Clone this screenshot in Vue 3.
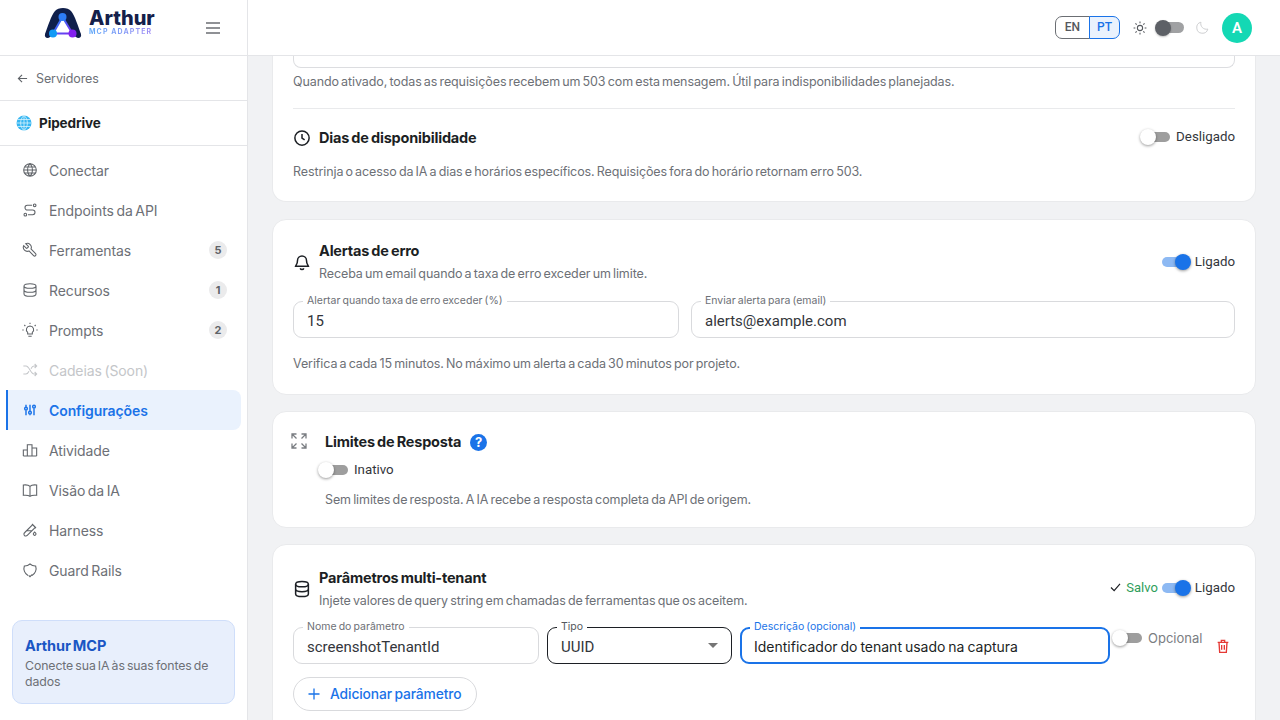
<template>
  <div class="app">
    <aside class="sidebar">
      <div class="brand">
        <div class="logo">
          <svg class="logo__mark" viewBox="0 0 38 32" width="38" height="32">
            <defs>
              <linearGradient id="tri" x1="0" y1="0" x2="1" y2="1">
                <stop offset="0" stop-color="#1e88f5" />
                <stop offset="1" stop-color="#7c2bf0" />
              </linearGradient>
            </defs>
            <path d="M1 27C4 19 7 9 11 4 14 0 24 0 27 4 31 9 34 19 37 27 38 31 34 32 32 30 28 27 24 25 19 25 14 25 10 27 6 30 4 32 0 31 1 27Z" fill="#0f1f4b" />
            <path d="M18.500 10 9 26.500H28.500Z" fill="#fff" stroke="url(#tri)" stroke-width="2" stroke-linejoin="round" />
            <circle cx="18.500" cy="10" r="4" fill="#2d7cf5" />
            <circle cx="9" cy="26.500" r="4" fill="#129af5" />
            <circle cx="28.500" cy="26.500" r="4" fill="#8221ee" />
          </svg>
          <div class="logo__text">
            <span class="logo__name">Arthur</span>
            <span class="logo__sub">MCP ADAPTER</span>
          </div>
        </div>
        <svg class="burger" viewBox="0 0 14 12" width="14" height="12">
          <path d="M0 1H14M0 6H14M0 11H14" stroke="#6b6e73" stroke-width="1.500" fill="none" />
        </svg>
      </div>

      <div class="back">
        <svg viewBox="0 0 12 12" width="11" height="11">
          <path d="M11 6H1.500M5.500 2 1.500 6l4 4" stroke="#5f6368" stroke-width="1.200" fill="none" />
        </svg>
        <span>Servidores</span>
      </div>

      <div class="server">
        <svg viewBox="0 0 16 16" width="16" height="16">
          <circle cx="8" cy="8" r="7.500" fill="#35b6f2" />
          <path d="M.5 8h15M1.500 4.500h13M1.500 11.500h13M8 .5v15M8 .5C3.500 4 3.500 12 8 15.500M8 .5c4.500 3.500 4.500 11.500 0 15" stroke="#d7f2fd" stroke-width=".8" fill="none" />
        </svg>
        <span>Pipedrive</span>
      </div>

      <nav class="nav">
        <div
          v-for="item in navItems"
          :key="item.label"
          :class="['nav__item', { 'nav__item--active': item.active, 'nav__item--off': item.off }]"
        >
          <svg class="nav__icon" viewBox="0 0 24 24" width="16" height="16">
            <path :d="item.icon" :transform="item.flip ? 'matrix(-1 0 0 1 24 0)' : undefined" />
          </svg>
          <span class="nav__label">{{ item.label }}</span>
          <span v-if="item.badge" class="nav__badge">{{ item.badge }}</span>
        </div>
      </nav>

      <div class="promo">
        <div class="promo__title">Arthur MCP</div>
        <div class="promo__text">Conecte sua IA às suas fontes de dados</div>
      </div>
    </aside>

    <div class="main">
      <header class="topbar">
        <div class="lang">
          <span class="lang__btn">EN</span>
          <span class="lang__btn lang__btn--on">PT</span>
        </div>
        <svg class="sun" viewBox="0 0 24 24" width="14" height="14">
          <circle cx="12" cy="12" r="4.500" />
          <path d="M12 1v3M12 20v3M1 12h3M20 12h3M4.200 4.200l2.100 2.100M17.700 17.700l2.100 2.100M4.200 19.800l2.100-2.100M17.700 6.300l2.100-2.100" />
        </svg>
        <span class="theme-switch"><span class="theme-switch__knob"></span></span>
        <svg class="moon" viewBox="0 0 24 24" width="15" height="15">
          <path d="M20.500 14.500A9 9 0 0 1 9.500 3.500a9 9 0 1 0 11 11Z" />
        </svg>
        <span class="avatar">A</span>
      </header>

      <div class="content">
        <div class="scroll">
          <section class="card card--first">
            <div class="field-stub"></div>
            <p class="hint">Quando ativado, todas as requisições recebem um 503 com esta mensagem. Útil para indisponibilidades planejadas.</p>
            <hr class="divider" />
            <div class="row">
              <div class="row__title">
                <svg class="head-icon" viewBox="0 0 24 24" width="18" height="18">
                  <circle cx="12" cy="12" r="9.500" />
                  <path d="M12 6.500V12l3.500 2.500" />
                </svg>
                <h3>Dias de disponibilidade</h3>
              </div>
              <div class="toggle">
                <span class="switch"><span class="switch__knob"></span></span>
                <span class="toggle__label">Desligado</span>
              </div>
            </div>
            <p class="hint hint--dias">Restrinja o acesso da IA a dias e horários específicos. Requisições fora do horário retornam erro 503.</p>
          </section>

          <section class="card card--alerts">
            <div class="row">
              <div class="row__title">
                <svg class="head-icon" viewBox="0 0 24 24" width="18" height="18">
                  <path d="M6 10a6 6 0 0 1 12 0c0 5 2 6 2.500 7.500h-17C4 16 6 15 6 10Z" />
                  <path d="M9.500 20.500a2.800 2.800 0 0 0 5 0" />
                </svg>
                <div>
                  <h3>Alertas de erro</h3>
                  <p class="sub">Receba um email quando a taxa de erro exceder um limite.</p>
                </div>
              </div>
              <div class="toggle">
                <span class="switch switch--on"><span class="switch__knob"></span></span>
                <span class="toggle__label">Ligado</span>
              </div>
            </div>
            <div class="alert-fields">
              <label class="field">
                <span class="field__legend">Alertar quando taxa de erro exceder (%)</span>
                <span class="field__value">15</span>
              </label>
              <label class="field">
                <span class="field__legend">Enviar alerta para (email)</span>
                <span class="field__value">alerts@example.com</span>
              </label>
            </div>
            <p class="hint">Verifica a cada 15 minutos. No máximo um alerta a cada 30 minutos por projeto.</p>
          </section>

          <section class="card card--limits">
            <svg class="expand" viewBox="0 0 16 16" width="16" height="16">
              <path d="M1 5.500V1h4.500M1 1l4.500 4.500M15 5.500V1h-4.500M15 1l-4.500 4.500M1 10.500V15h4.500M1 15l4.500-4.500M15 10.500V15h-4.500M15 15l-4.500-4.500" />
            </svg>
            <div class="limits__body">
              <div class="limits__title">
                <h3>Limites de Resposta</h3>
                <span class="help">?</span>
              </div>
              <div class="toggle toggle--inativo">
                <span class="switch"><span class="switch__knob"></span></span>
                <span class="toggle__label">Inativo</span>
              </div>
              <p class="hint">Sem limites de resposta. A IA recebe a resposta completa da API de origem.</p>
            </div>
          </section>

          <section class="card card--tenant">
            <div class="row">
              <div class="row__title">
                <svg class="head-icon" viewBox="0 0 24 24" width="18" height="18">
                  <ellipse cx="12" cy="5.500" rx="8.500" ry="3.500" />
                  <path d="M3.500 5.500v13c0 2 3.800 3.500 8.500 3.500s8.500-1.500 8.500-3.500v-13M3.500 12c0 2 3.800 3.500 8.500 3.500s8.500-1.500 8.500-3.500" />
                </svg>
                <div>
                  <h3>Parâmetros multi-tenant</h3>
                  <p class="sub">Injete valores de query string em chamadas de ferramentas que os aceitem.</p>
                </div>
              </div>
              <div class="toggle">
                <svg class="check" viewBox="0 0 12 10" width="11" height="9">
                  <path d="M1 5l3.500 3.500L11 1" />
                </svg>
                <span class="saved">Salvo</span>
                <span class="switch switch--on"><span class="switch__knob"></span></span>
                <span class="toggle__label">Ligado</span>
              </div>
            </div>
            <div class="param">
              <label class="field field--name">
                <span class="field__legend">Nome do parâmetro</span>
                <span class="field__value">screenshotTenantId</span>
              </label>
              <label class="field field--type field--dark">
                <span class="field__legend">Tipo</span>
                <span class="field__value">UUID</span>
                <span class="caret"></span>
              </label>
              <label class="field field--desc field--focus">
                <span class="field__legend">Descrição (opcional)</span>
                <span class="field__value field__value--jakarta">Identificador do tenant usado na captura</span>
              </label>
              <div class="optional">
                <span class="switch"><span class="switch__knob"></span></span>
                <span class="optional__label">Opcional</span>
              </div>
              <svg class="trash" viewBox="0 0 24 24" width="16" height="16">
                <path d="M4 6.500h16M9.500 6.500V3.500h5v3M6 6.500l1 15h10l1-15M10 10.500v7M14 10.500v7" />
              </svg>
            </div>
            <div class="add">
              <svg viewBox="0 0 12 12" width="12" height="12">
                <path d="M6 .5v11M.5 6h11" stroke="#1a73e8" stroke-width="1.300" fill="none" />
              </svg>
              <span>Adicionar parâmetro</span>
            </div>
          </section>
        </div>
      </div>
    </div>
  </div>
</template>

<script setup>
const navItems = [
  { label: 'Conectar', icon: 'M12 2.500a9.500 9.500 0 1 0 0 19 9.500 9.500 0 0 0 0-19ZM2.500 12h19M3.700 7.500h16.600M3.700 16.500h16.600M12 2.500c-5 5-5 14 0 19M12 2.500c5 5 5 14 0 19' },
  { label: 'Endpoints da API', icon: 'M5 21a2 2 0 1 0 0-4 2 2 0 0 0 0 4ZM19 7a2 2 0 1 0 0-4 2 2 0 0 0 0 4ZM15 5H8a3.500 3.500 0 0 0 0 7h8a3.500 3.500 0 0 1 0 7H9' },
  { label: 'Ferramentas', flip: true, badge: 5, icon: 'M14.700 6.300a1 1 0 0 0 0 1.400l1.600 1.600a1 1 0 0 0 1.400 0l3.770-3.770a6 6 0 0 1-7.940 7.940l-6.910 6.910a2.120 2.120 0 0 1-3-3l6.910-6.910a6 6 0 0 1 7.940-7.940l-3.760 3.760Z' },
  { label: 'Recursos', badge: 1, icon: 'M12 2.500c5 0 9 1.500 9 3.500s-4 3.500-9 3.500S3 8 3 6s4-3.500 9-3.500ZM3 6v12c0 2 4 3.500 9 3.500s9-1.500 9-3.500V6M3 12c0 2 4 3.500 9 3.500s9-1.500 9-3.500' },
  { label: 'Prompts', badge: 2, icon: 'M12 6a5.500 5.500 0 0 0-3.500 9.700V18h7v-2.300A5.500 5.500 0 0 0 12 6ZM9.500 21.500h5M12 1v2M3.500 4.500 5 6M20.500 4.500 19 6M.5 12h2M21.500 12h2' },
  { label: 'Cadeias (Soon)', off: true, icon: 'M2 6h4c5 0 7 12 12 12h4M2 18h4c2 0 3.500-2 4.500-4M13.500 10c1-2 2.500-4 4.500-4h4M19 3l3 3-3 3M19 15l3 3-3 3' },
  { label: 'Configurações', active: true, icon: 'M4 10a2 2 0 1 0 4 0 2 2 0 0 0-4 0M6 4v4M6 12v8M10 16a2 2 0 1 0 4 0 2 2 0 0 0-4 0M12 4v10M12 18v2M16 7a2 2 0 1 0 4 0 2 2 0 0 0-4 0M18 4v1M18 9v11' },
  { label: 'Atividade', icon: 'M2 21V12h6v9M8 21V4h7v17M15 21V9h7v12M2 21h20' },
  { label: 'Visão da IA', icon: 'M12 6.500C10 4.500 6 4 2 4.500V20c4-.5 8 0 10 1.500 2-1.500 6-2 10-1.500V4.500C18 4 14 4.500 12 6.500ZM12 6.500v15' },
  { label: 'Harness', icon: 'M20 8.040 7.880 20.160a2.860 2.860 0 1 1-4.040-4.040L15.960 4M7 13h8M19 15l1.500 1.600a2 2 0 1 1-3 0L19 15ZM15 3l6 6' },
  { label: 'Guard Rails', icon: 'M9 20.300A12 12 0 0 1 3.500 6 12 12 0 0 0 12 3a12 12 0 0 0 8.500 3A12 12 0 0 1 15 20.300M10 20l2 2 3-3' },
]
</script>

<style>
html,
body {
  margin: 0;
  background: #f1f2f4;
}
</style>

<style scoped>
.app {
  display: flex;
  width: 1280px;
  height: 720px;
  overflow: hidden;
  font-family: Inter, "Open Sans", sans-serif;
  letter-spacing: -0.1px;
  word-spacing: -1.2px;
  color: #1c1f24;
  background: #f1f2f4;
}

/* Sidebar */
.sidebar {
  flex: 0 0 248px;
  box-sizing: border-box;
  display: flex;
  flex-direction: column;
  background: #fff;
  border-right: 1px solid #e4e5e8;
}

.brand {
  box-sizing: border-box;
  height: 56px;
  display: flex;
  align-items: center;
  padding: 0 27px 0 44px;
  justify-content: space-between;
  border-bottom: 1px solid #e4e5e8;
}

.logo {
  display: flex;
  align-items: center;
  gap: 7px;
  margin-bottom: 9px;
}

.logo__text {
  display: flex;
  flex-direction: column;
  margin-bottom: 2px;
}

.logo__name {
  font-size: 20px;
  font-weight: 800;
  line-height: 20px;
  letter-spacing: 0;
  color: #14204a;
}

.logo__sub {
  font-size: 7px;
  font-weight: 700;
  line-height: 8px;
  letter-spacing: 1.100px;
  word-spacing: 0;
  background: linear-gradient(90deg, #5fa8f8, #a58df5);
  -webkit-background-clip: text;
  background-clip: text;
  color: transparent;
}

.back {
  box-sizing: border-box;
  height: 45px;
  display: flex;
  align-items: center;
  gap: 8px;
  padding-left: 17px;
  font-size: 12.500px;
  color: #6d7076;
  border-bottom: 1px solid #e4e5e8;
}

.server {
  box-sizing: border-box;
  height: 45px;
  display: flex;
  align-items: center;
  gap: 7px;
  padding-left: 16px;
  font-size: 13.500px;
  font-weight: 700;
  border-bottom: 1px solid #e4e5e8;
}

.nav {
  display: flex;
  flex-direction: column;
  padding: 4px 6px 0;
}

.nav__item {
  box-sizing: border-box;
  height: 40px;
  display: flex;
  align-items: center;
  padding: 0 14px 0 16px;
  font-size: 14px;
  color: #6d7076;
  border-radius: 0 8px 8px 0;
}

.nav__icon {
  flex: none;
  margin-right: 11px;
  fill: none;
  stroke: #5f6368;
  stroke-width: 1.600;
}

.nav__label {
  flex: 1;
}

.nav__item--off {
  color: #c4c6c9;
}

.nav__item--off .nav__icon {
  stroke: #c4c6c9;
}

.nav__item--active {
  padding-left: 14px;
  border-left: 2px solid #1a73e8;
  background: #eaf2fd;
  color: #1a73e8;
  font-weight: 600;
}

.nav__item--active .nav__icon {
  stroke: #1a73e8;
  stroke-width: 2.200;
}

.nav__badge {
  width: 18px;
  height: 18px;
  border-radius: 50%;
  background: #ebebec;
  color: #5f6368;
  font-size: 11px;
  font-weight: 700;
  line-height: 18px;
  text-align: center;
}

.promo {
  box-sizing: border-box;
  margin: 30px 12px 0;
  height: 84px;
  padding: 16px 12px;
  border: 1px solid #cfdefa;
  border-radius: 10px;
  background: #e8effc;
}

.promo__title {
  font-size: 14.500px;
  line-height: 18px;
  font-weight: 700;
  color: #1a56c4;
}

.promo__text {
  margin-top: 3px;
  font-size: 12.300px;
  line-height: 16px;
  color: #6d7076;
}

/* Top bar */
.main {
  flex: 1;
  min-width: 0;
  display: flex;
  flex-direction: column;
}

.topbar {
  flex: 0 0 56px;
  box-sizing: border-box;
  display: flex;
  align-items: center;
  justify-content: flex-end;
  padding-right: 28px;
  background: #fff;
  border-bottom: 1px solid #e4e5e8;
}

.lang {
  display: flex;
  margin-right: 13px;
}

.lang__btn {
  box-sizing: border-box;
  width: 35px;
  height: 23px;
  border: 1px solid #6b6e73;
  border-radius: 7px 0 0 7px;
  font-size: 12px;
  line-height: 21px;
  letter-spacing: 0;
  text-align: center;
  color: #55585d;
  font-family: Roboto, sans-serif;
  font-weight: 500;
}

.lang__btn--on {
  width: 31px;
  margin-left: -1px;
  border-color: #1a73e8;
  border-radius: 0 7px 7px 0;
  background: #eaf2fd;
  color: #1a73e8;
}

.sun {
  fill: none;
  stroke: #55585d;
  stroke-width: 1.800;
}

.theme-switch {
  position: relative;
  width: 22px;
  height: 11px;
  margin: 0 11px 0 15px;
  border-radius: 6px;
  background: #a0a1a3;
}

.theme-switch__knob {
  position: absolute;
  left: -7px;
  top: -2.500px;
  width: 16px;
  height: 16px;
  border-radius: 50%;
  background: #5d6066;
  box-shadow: 0 1px 2px rgba(0, 0, 0, 0.25);
}

.moon {
  fill: none;
  stroke: #cfd0d2;
  stroke-width: 1.600;
  margin-right: 12px;
}

.avatar {
  width: 30px;
  height: 30px;
  border-radius: 50%;
  background: #14d8b4;
  color: #fff;
  font-family: Roboto, sans-serif;
  font-weight: 600;
  font-size: 15px;
  line-height: 30px;
  text-align: center;
}

/* Content */
.content {
  flex: 1;
  min-height: 0;
  overflow: hidden;
}

.scroll {
  display: flex;
  flex-direction: column;
  gap: 16px;
  padding: 0 24px;
  margin-top: -17px;
}

.card {
  box-sizing: border-box;
  flex: none;
  background: #fff;
  border: 1px solid #e9eaec;
  border-radius: 14px;
  padding: 0 20px;
}

.card--first {
  height: 163px;
  margin-bottom: 1px;
  border-top: 0;
  border-radius: 0 0 14px 14px;
}

.field-stub {
  height: 28px;
  margin: 0;
  border: 1px solid #dcdde0;
  border-top: 0;
  border-radius: 0 0 8px 8px;
}

.hint {
  margin: 0;
  font-size: 12.500px;
  line-height: 18px;
  color: #6d7076;
}

.card--first .hint:first-of-type {
  margin-top: 5px;
}

.divider {
  margin: 17px 0 0;
  border: 0;
  border-top: 1px solid #e9eaec;
}

.card--first .row {
  margin-top: 19px;
}

.card--first .toggle,
.card--tenant .toggle {
  margin-bottom: 3px;
}

.hint--dias {
  margin-top: 15px;
}

.row {
  display: flex;
  align-items: center;
  justify-content: space-between;
}

.row__title {
  display: flex;
  align-items: center;
  gap: 8px;
}

h3 {
  margin: 0;
  font-size: 14.500px;
  line-height: 20px;
  font-weight: 700;
  letter-spacing: -0.2px;
  word-spacing: -1px;
  color: #1c1f24;
}

.sub {
  margin: 4px 0 0;
  font-size: 12.500px;
  line-height: 18px;
  color: #6d7076;
}

.head-icon {
  flex: none;
  fill: none;
  stroke: #1c1f24;
  stroke-width: 2;
}

.toggle {
  display: flex;
  align-items: center;
  font-family: Roboto, sans-serif;
  font-size: 13.300px;
  letter-spacing: 0;
  word-spacing: 0;
  color: #33363b;
}

.toggle__label {
  margin-left: 5px;
}

.switch {
  position: relative;
  display: inline-block;
  width: 22px;
  height: 10px;
  border-radius: 5px;
  background: #9e9e9e;
  margin: 0 1px 0 8px;
}

.switch__knob {
  position: absolute;
  left: -8px;
  top: -3px;
  width: 16px;
  height: 16px;
  border-radius: 50%;
  background: #fff;
  box-shadow: 0 1px 3px rgba(0, 0, 0, 0.4);
}

.switch--on {
  background: #8db9f3;
  margin: 0 6px 0 0;
}

.switch--on .switch__knob {
  left: 13px;
  background: #1a73e8;
}

.card--alerts {
  height: 176px;
  padding-top: 21px;
}

.card--alerts .toggle {
  margin-bottom: 1px;
}

.alert-fields {
  display: grid;
  grid-template-columns: 386px 1fr;
  gap: 12px;
  margin-top: 18px;
}

.card--alerts > .hint {
  margin-top: 17px;
}

.field {
  position: relative;
  box-sizing: border-box;
  display: flex;
  align-items: center;
  height: 37px;
  padding: 2px 13px 0;
  border: 1px solid #d9dadd;
  border-radius: 9px;
  font-family: Roboto, sans-serif;
  font-size: 15px;
  letter-spacing: 0;
  word-spacing: 0;
  color: #33363b;
}

.field__legend {
  position: absolute;
  left: 9px;
  top: -7px;
  padding: 0 4px;
  background: #fff;
  font-family: Inter, sans-serif;
  font-size: 10.500px;
  line-height: 12px;
  word-spacing: -0.8px;
  color: #6d7076;
  white-space: nowrap;
}

.field__value--jakarta {
  font-family: Inter, sans-serif;
  font-size: 14px;
  word-spacing: -1px;
}

.card--limits {
  height: 117px;
  display: flex;
  padding: 20px 18px 0;
}

.expand {
  flex: none;
  margin-top: 1px;
  fill: none;
  stroke: #7a7d82;
  stroke-width: 1.300;
}

.limits__body {
  margin-left: 18px;
}

.limits__title {
  display: flex;
  align-items: center;
  gap: 9px;
}

.help {
  width: 17px;
  height: 17px;
  border-radius: 50%;
  background: #1a73e8;
  color: #fff;
  font-size: 13px;
  font-weight: 700;
  line-height: 17px;
  text-align: center;
}

.toggle--inativo {
  margin: 10px 0 0 -7px;
}

.limits__body .hint {
  margin-top: 14px;
}

.card--tenant {
  height: 200px;
  padding-top: 23px;
}

.param {
  display: flex;
  align-items: center;
  margin-top: 17px;
}

.field--name {
  width: 246px;
}

.field--type {
  width: 185px;
  margin-left: 8px;
}

.field--desc {
  width: 370px;
  margin-left: 8px;
  padding-left: 12px;
}

.field--dark {
  border-color: #1c1f24;
}

.field--dark .field__legend {
  color: #55585d;
}

.field--focus {
  border: 2px solid #1a73e8;
  color: #1c1f24;
}

.field--focus .field__legend {
  color: #1a73e8;
  left: 8px;
  top: -8px;
}

.caret {
  position: absolute;
  right: 13px;
  top: 15px;
  border-left: 5px solid transparent;
  border-right: 5px solid transparent;
  border-top: 5px solid #757575;
}

.optional {
  display: flex;
  align-items: center;
  align-self: flex-start;
  margin: 3px 0 0 2px;
}

.optional__label {
  margin-left: 5px;
  font-size: 13px;
  letter-spacing: 0;
  color: #7a7d82;
}

.trash {
  margin-left: 13px;
  fill: none;
  stroke: #e53935;
  stroke-width: 2;
}

.add {
  box-sizing: border-box;
  display: inline-flex;
  align-items: center;
  gap: 10px;
  height: 34px;
  margin-top: 13px;
  padding: 0 14px;
  border: 1px solid #d9dadd;
  border-radius: 17px;
  font-size: 13.800px;
  font-weight: 500;
  color: #1a73e8;
}

.check {
  fill: none;
  stroke: #1c1f24;
  stroke-width: 1.300;
  margin-right: 5px;
}

.saved {
  font-size: 13px;
  color: #2e9e5b;
  margin-right: 4px;
}
</style>
